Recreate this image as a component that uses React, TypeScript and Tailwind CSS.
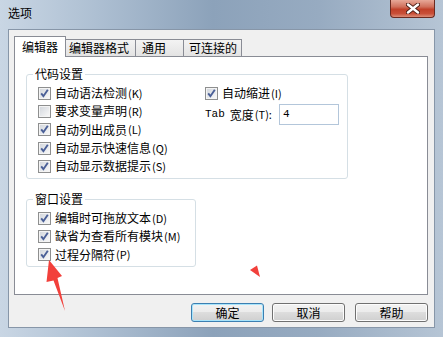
import React from "react"

const cjk = "font-['Noto_Sans_CJK_SC','Microsoft_YaHei',sans-serif]"

function CheckBox({ checked }: { checked: boolean }) {
  return (
    <svg width="13" height="13" viewBox="0 0 13 13" className="shrink-0">
      <defs>
        <linearGradient id="cb-in" x1="0" y1="0" x2="1" y2="1">
          <stop offset="0" stopColor="#d4d8de" />
          <stop offset="1" stopColor="#f7f7f7" />
        </linearGradient>
      </defs>
      <rect x="0.5" y="0.5" width="12" height="12" fill="#f4f4f4" stroke="#8e8f8f" />
      <rect x="2" y="2" width="9" height="9" fill="url(#cb-in)" />
      {checked && (
        <path d="M3.2 6.4 L5.4 9.2 L9.8 2.8" stroke="#4a5f97" strokeWidth="1.9" fill="none" />
      )}
    </svg>
  )
}

function Row({ checked, label, hotkey }: { checked: boolean; label: string; hotkey: string }) {
  return (
    <div className="flex h-[18.3px] items-center gap-[4px]">
      <CheckBox checked={checked} />
      <span className="flex items-center whitespace-nowrap text-[12px] leading-none text-black">
        {label}
        <span className="ml-[1px] text-[11px]">({hotkey})</span>
      </span>
    </div>
  )
}

function GroupBox({
  title,
  className,
  children,
}: {
  title: string
  className: string
  children: React.ReactNode
}) {
  return (
    <div className={`relative rounded-[3px] border border-[#d5dfe5] ${className}`}>
      <span className="absolute -top-[10px] left-[6px] bg-white px-[2px] text-[12px] leading-[18px] text-black">
        {title}
      </span>
      {children}
    </div>
  )
}

function DlgButton({ label, primary }: { label: string; primary?: boolean }) {
  return (
    <button
      type="button"
      className={
        "flex h-[19px] w-[73px] items-center justify-center rounded-[3px] border bg-[linear-gradient(#f2f2f2_0%,#ebebeb_50%,#dddddd_50%,#cfcfcf_100%)] text-[12px] leading-none text-black " +
        (primary
          ? "border-[#3c7fb1] shadow-[inset_0_0_0_1px_#a8e4fb]"
          : "border-[#707070] shadow-[inset_0_0_0_1px_#fcfcfc]")
      }
    >
      {label}
    </button>
  )
}

export default function App() {
  const codeLeft = [
    { checked: true, label: "自动语法检测", hotkey: "K" },
    { checked: false, label: "要求变量声明", hotkey: "R" },
    { checked: true, label: "自动列出成员", hotkey: "L" },
    { checked: true, label: "自动显示快速信息", hotkey: "Q" },
    { checked: true, label: "自动显示数据提示", hotkey: "S" },
  ]
  const windowRows = [
    { checked: true, label: "编辑时可拖放文本", hotkey: "D" },
    { checked: true, label: "缺省为查看所有模块", hotkey: "M" },
    { checked: true, label: "过程分隔符", hotkey: "P" },
  ]

  return (
    <div
      className={`relative flex h-[337px] w-[443px] flex-col overflow-hidden bg-[linear-gradient(90deg,#c9d6e4_0%,#adbfd2_22%,#8ca2ba_48%,#97abc1_72%,#b6c5d5_100%)] px-[8px] pb-[9px] ${cjk}`}
    >
      {/* title bar */}
      <div className="flex h-[29px] shrink-0 items-start justify-between">
        <span className="pt-[7px] text-[12px] leading-none text-black">选项</span>
        <div className="flex h-[18px] w-[45px] items-center justify-center rounded-b-[4px] border border-t-0 border-[#6b2a20] bg-[linear-gradient(#e7a898_0%,#d0705c_40%,#c1412a_55%,#c94f38_80%,#dc8d78_100%)]">
          <svg width="14" height="11" viewBox="0 0 14 11">
            <path d="M2 1.5 L12 9.5 M12 1.5 L2 9.5" stroke="#4a1c15" strokeWidth="4.2" strokeLinecap="round" />
            <path d="M2 1.5 L12 9.5 M12 1.5 L2 9.5" stroke="#ffffff" strokeWidth="2.4" strokeLinecap="round" />
          </svg>
        </div>
      </div>

      {/* client area */}
      <div className="flex flex-1 flex-col border border-[#8796a8] bg-[#f0f0f0] pl-[5px] pt-[6px]">
        {/* tabs */}
        <div className="relative z-10 -mb-px flex h-[21px] items-end">
          <div className="flex h-[21px] w-[52px] items-start border-x border-t border-[#898c95] bg-white pl-[7px] pt-[3px] text-[12px] leading-[14px]">
            编辑器
          </div>
          <div className="mb-px flex h-[17px] w-[70px] items-center border-r border-t border-[#898c95] bg-[linear-gradient(#f3f3f3,#e3e3e3)] pl-[3px] text-[12px] leading-none">
            编辑器格式
          </div>
          <div className="mb-px flex h-[17px] w-[48px] items-center border-r border-t border-[#898c95] bg-[linear-gradient(#f3f3f3,#e3e3e3)] pl-[6px] text-[12px] leading-none">
            通用
          </div>
          <div className="mb-px flex h-[17px] w-[58px] items-center border-r border-t border-[#898c95] bg-[linear-gradient(#f3f3f3,#e3e3e3)] pl-[5px] text-[12px] leading-none">
            可连接的
          </div>
        </div>

        {/* tab page */}
        <div className="flex h-[239px] w-[414px] flex-col border border-[#898c95] bg-white pl-[11px] pt-[17px]">
          <GroupBox title="代码设置" className="flex h-[105px] w-[322px] pl-[11px] pt-[9px]">
            <div className="flex w-[167px] flex-col">
              {codeLeft.map((r) => (
                <Row key={r.hotkey} {...r} />
              ))}
            </div>
            <div className="flex flex-col">
              <Row checked label="自动缩进" hotkey="I" />
              <div className="mt-[2px] flex items-center text-[12px] leading-none">
                <span className="flex w-[74px] items-center whitespace-nowrap">
                  <span className="font-['Liberation_Mono',monospace] text-[11px]">Tab</span>
                  <span className="ml-[5px]">宽度</span>
                  <span className="ml-[1px] text-[11px]">(T):</span>
                </span>
                <div className="flex h-[21px] w-[60px] items-center border border-[#b3c6da] bg-white pl-[3px] font-['Liberation_Mono',monospace] text-[11px]">
                  4
                </div>
              </div>
            </div>
          </GroupBox>

          <GroupBox title="窗口设置" className="mt-[20px] flex h-[68px] w-[170px] flex-col pl-[11px] pt-[9px]">
            {windowRows.map((r) => (
              <Row key={r.hotkey} {...r} />
            ))}
          </GroupBox>
        </div>

        {/* buttons */}
        <div className="mt-[8px] flex justify-end pr-[6px]">
          <DlgButton label="确定" primary />
          <div className="ml-[8px]">
            <DlgButton label="取消" />
          </div>
          <div className="ml-[10px]">
            <DlgButton label="帮助" />
          </div>
        </div>
      </div>

      {/* red annotation arrows */}
      <svg
        className="pointer-events-none absolute left-0 top-0"
        width="443"
        height="337"
        viewBox="0 0 443 337"
      >
        <polygon points="49,260 62,276 57.5,278 65,311 53.5,280.5 46.5,282" fill="#f2403b" />
        <polygon points="250,270 257,265.5 260,277" fill="#f2403b" />
      </svg>
    </div>
  )
}
